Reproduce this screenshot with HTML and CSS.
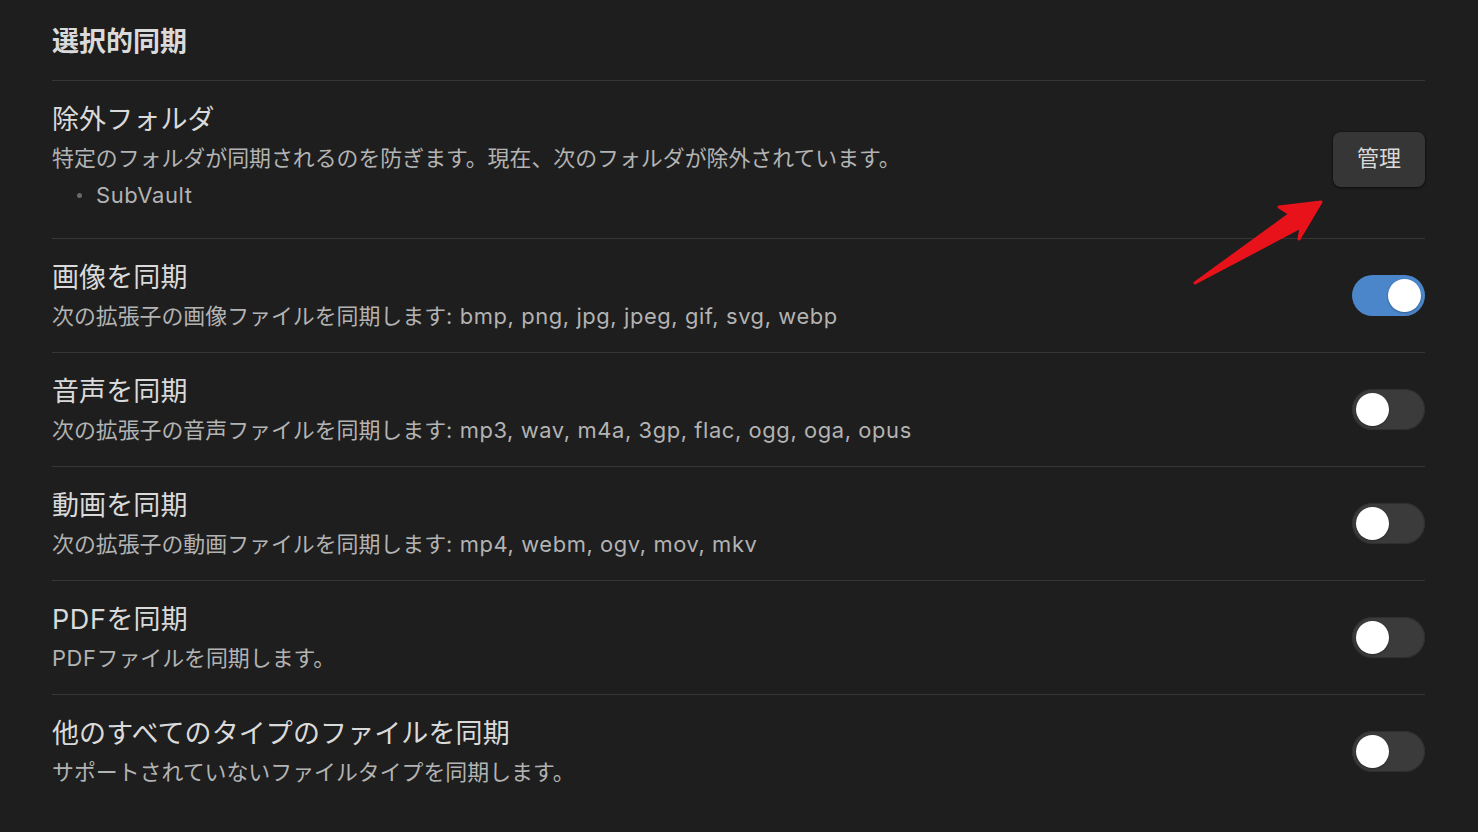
FILE: index.html
```html
<!DOCTYPE html>
<html lang="ja">
<head>
<meta charset="utf-8">
<title>選択的同期</title>
<link rel="stylesheet" href="styles.css">
</head>
<body>
<div class="page">
  <div class="heading">選択的同期</div>

  <div class="item">
    <div class="info">
      <div class="name">除外フォルダ</div>
      <div class="desc">特定のフォルダが同期されるのを防ぎます。現在、次のフォルダが除外されています。</div>
      <ul class="list"><li><span class="lat">SubVault</span></li></ul>
    </div>
    <button class="btn">管理</button>
  </div>

  <div class="item">
    <div class="info">
      <div class="name">画像を同期</div>
      <div class="desc">次の拡張子の画像ファイルを同期します<span class="lat">: bmp, png, jpg, jpeg, gif, svg, webp</span></div>
    </div>
    <div class="toggle on"><div class="knob"></div></div>
  </div>

  <div class="item">
    <div class="info">
      <div class="name">音声を同期</div>
      <div class="desc">次の拡張子の音声ファイルを同期します<span class="lat">: mp3, wav, m4a, 3gp, flac, ogg, oga, opus</span></div>
    </div>
    <div class="toggle"><div class="knob"></div></div>
  </div>

  <div class="item">
    <div class="info">
      <div class="name">動画を同期</div>
      <div class="desc">次の拡張子の動画ファイルを同期します<span class="lat">: mp4, webm, ogv, mov, mkv</span></div>
    </div>
    <div class="toggle"><div class="knob"></div></div>
  </div>

  <div class="item">
    <div class="info">
      <div class="name"><span class="lat">PDF</span>を同期</div>
      <div class="desc"><span class="lat">PDF</span>ファイルを同期します。</div>
    </div>
    <div class="toggle"><div class="knob"></div></div>
  </div>

  <div class="item last">
    <div class="info">
      <div class="name">他のすべてのタイプのファイルを同期</div>
      <div class="desc">サポートされていないファイルタイプを同期します。</div>
    </div>
    <div class="toggle"><div class="knob"></div></div>
  </div>
</div>

<svg class="arrow" width="1478" height="832" viewBox="0 0 1478 832">
  <path d="M1195 283 L1290 214 L1279 207 L1321 202 L1299 239 L1301 227 Z" fill="#e8121a" stroke="#e8121a" stroke-width="3" stroke-linejoin="round"/>
</svg>
</body>
</html>
```

FILE: styles.css
```css
html, body {
  margin: 0;
  padding: 0;
  background: #1e1e1e;
}
body {
  font-family: Inter, "Noto Sans CJK JP", sans-serif;
  color: #dadada;
  width: 1478px;
  height: 832px;
  overflow: hidden;
  position: relative;
}
.page {
  padding: 0 53px 0 52px;
}
.heading {
  font-size: 27px;
  font-weight: 700;
  line-height: 34px;
  padding: 25px 0 21px;
  border-bottom: 1px solid #363636;
  color: #dadada;
}
.item {
  display: flex;
  align-items: center;
  justify-content: space-between;
  padding: 18px 0;
  border-bottom: 1px solid #363636;
}
.item.last {
  border-bottom: none;
}
.info {
  display: flex;
  flex-direction: column;
  padding-top: 4px;
}
.name {
  font-size: 27px;
  line-height: 34px;
  color: #dadada;
  letter-spacing: 0.1px;
}
.desc {
  font-size: 21.9px;
  line-height: 35px;
  margin-top: 4px;
  color: #b3b3b3;
}
.lat {
  letter-spacing: 0.6px;
}
.list {
  margin: 1px 0 7px;
  padding-left: 44px;
  font-size: 22px;
  line-height: 36px;
  color: #b3b3b3;
  list-style: none;
}
.list li {
  position: relative;
}
.list li::before {
  content: "";
  position: absolute;
  left: -19px;
  top: 16px;
  width: 5px;
  height: 5px;
  border-radius: 50%;
  background: #6a6a6a;
}
.btn {
  font-family: Inter, "Noto Sans CJK JP", sans-serif;
  font-size: 22px;
  line-height: 26px;
  color: #dadada;
  background: #363636;
  border: none;
  border-radius: 8px;
  width: 92px;
  height: 55px;
  box-shadow: 0 1px 3px rgba(0, 0, 0, 0.55), 0 0 0 1px rgba(0, 0, 0, 0.15);
  padding: 0 0 4px;
}
.toggle {
  width: 73px;
  height: 41px;
  border-radius: 21px;
  background: #3b3b3b;
  box-shadow: inset 0 0 0 1px #2f2f2f;
  display: flex;
  align-items: center;
  padding: 0 4px;
  box-sizing: border-box;
  flex-shrink: 0;
}
.toggle.on {
  background: #4a86c9;
  box-shadow: none;
  justify-content: flex-end;
}
.knob {
  width: 33px;
  height: 33px;
  border-radius: 50%;
  background: #ffffff;
  box-shadow: 0 1px 2px rgba(0, 0, 0, 0.3);
}
.arrow {
  position: absolute;
  left: 0;
  top: 0;
  pointer-events: none;
}
```
